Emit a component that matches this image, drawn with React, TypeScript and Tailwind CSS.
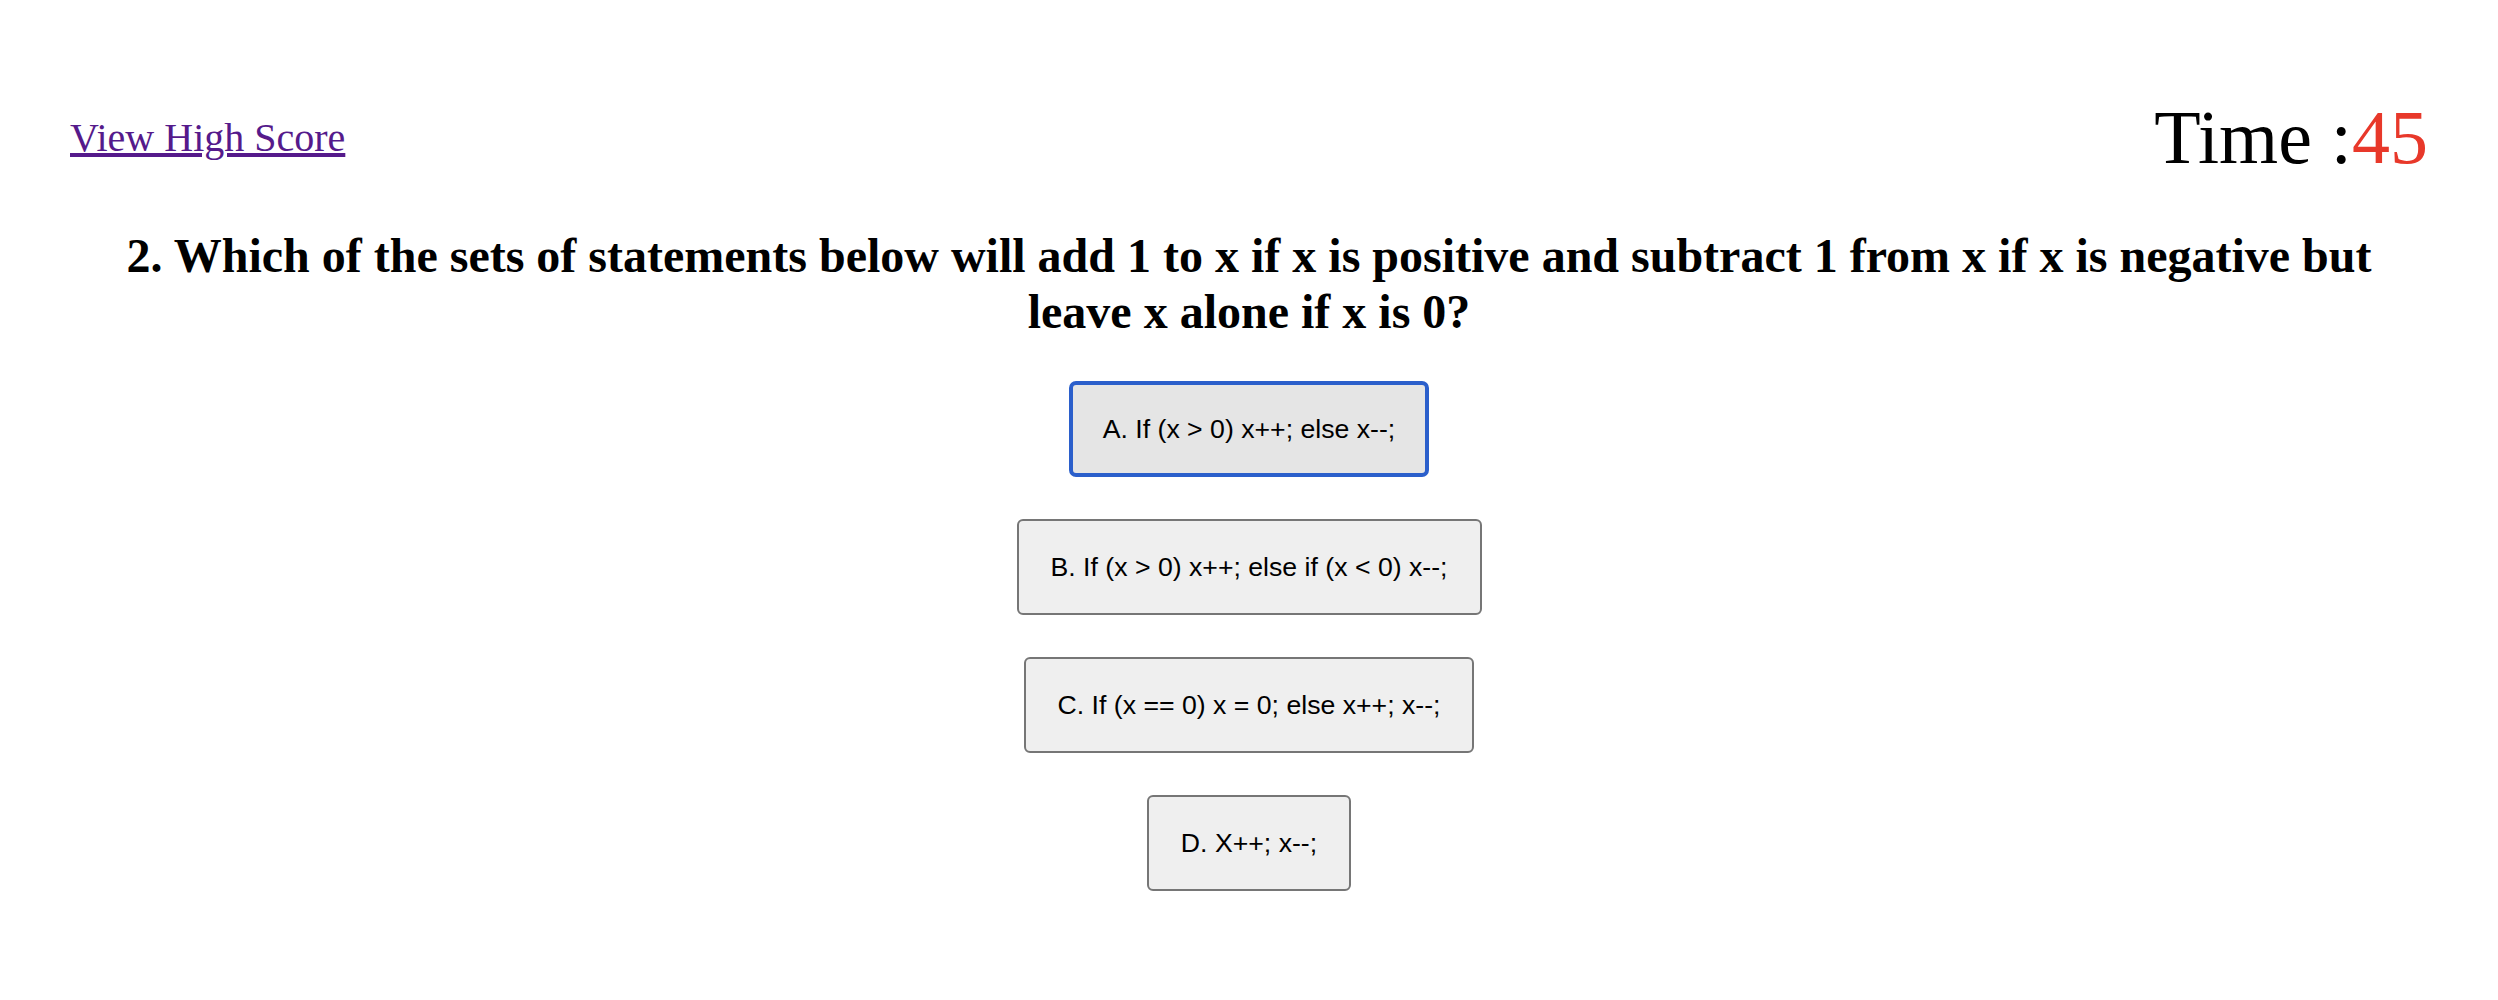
import { useState } from 'react';

const choices = [
  'A. If (x > 0) x++; else x--;',
  'B. If (x > 0) x++; else if (x < 0) x--;',
  'C. If (x == 0) x = 0; else x++; x--;',
  'D. X++; x--;',
];

export default function App() {
  const [focused] = useState(0);
  return (
    <div className="min-h-screen bg-white px-[70px] font-['Liberation_Serif',serif] text-black">
      {/* header */}
      <header className="flex items-center justify-between pt-[94px]">
        <a href="#" className="text-[40px] leading-[46px] text-[#551a8b] underline">
          View High Score
        </a>
        <div className="text-[76px] leading-[87px]">
          Time :<span className="text-[#e8382a]">45</span>
        </div>
      </header>

      <h2 className="mx-auto mt-[47px] max-w-[2300px] text-center text-[48px] font-bold leading-[56px]">
        2. Which of the sets of statements below will add 1 to x if x is positive and subtract 1 from x if x is negative but leave x alone if x is 0?
      </h2>

      <div className="mt-[41px] flex flex-col items-center gap-[42px]">
        {choices.map((c, i) => (
          <button
            key={c}
            className={
              i === focused
                ? "h-[96px] rounded-[7px] border-[4px] border-[#2b5fcb] bg-[#e5e5e5] px-[30px] font-['Liberation_Sans',Arial,sans-serif] text-[26.67px] text-black"
                : "h-[96px] rounded-[6px] border-2 border-[#767676] bg-[#efefef] px-[32px] font-['Liberation_Sans',Arial,sans-serif] text-[26.67px] text-black"
            }
          >
            {c}
          </button>
        ))}
      </div>
    </div>
  );
}
